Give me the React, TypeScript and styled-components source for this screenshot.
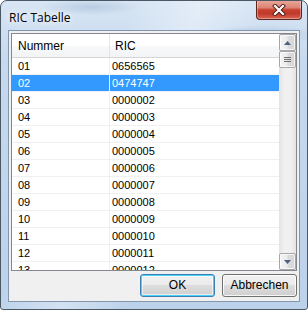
import React from "react";
import styled, { createGlobalStyle } from "styled-components";

const Global = createGlobalStyle`
  html, body { margin: 0; padding: 0; background: #ffffff; }
  body { font-family: "Liberation Sans", Arial, sans-serif; }
`;

const Window = styled.div`
  position: relative;
  width: 308px;
  height: 310px;
  box-sizing: border-box;
  border: 1px solid #4a5866;
  border-radius: 7px 7px 3px 3px;
  background:
    radial-gradient(ellipse 60px 10px at 260px 34px, rgba(120,150,185,0.35), rgba(120,150,185,0)),
    radial-gradient(ellipse 50px 8px at 90px 6px, rgba(130,160,195,0.35), rgba(130,160,195,0)),
    linear-gradient(115deg, rgba(255,255,255,0) 30%, rgba(255,255,255,0.35) 45%, rgba(255,255,255,0) 60%),
    linear-gradient(180deg, #d7e5f4 0%, #c6d9ee 20%, #bcd2ea 100%);
  display: flex;
  flex-direction: column;
  overflow: hidden;
`;

const TitleBar = styled.div`
  height: 29px;
  display: flex;
  align-items: flex-start;
  justify-content: space-between;
  padding-left: 8px;
  padding-right: 6px;
`;

const Title = styled.div`
  font-family: "Open Sans", "Noto Sans", sans-serif;
  font-size: 12px;
  color: #000;
  margin-top: 8px;
  text-shadow: 0 0 6px #ffffff, 0 0 10px #ffffff;
`;

const CloseButton = styled.div`
  width: 46px;
  height: 20px;
  margin-top: -1px;
  margin-right: -1px;
  box-sizing: border-box;
  border: 1px solid #5c2620;
  border-top: none;
  border-radius: 0 0 4px 4px;
  background: linear-gradient(180deg, #e9a99c 0%, #dc8575 40%, #c8412f 52%, #c0392b 70%, #d9634e 100%);
  box-shadow: inset 0 0 0 1px rgba(255,255,255,0.35);
  display: flex;
  align-items: center;
  justify-content: center;
`;

const Client = styled.div`
  flex: 1;
  margin: 0 7px 7px 7px;
  border: 1px solid #8396ad;
  background: #f0f0f0;
  display: flex;
  flex-direction: column;
  padding: 2px;
`;

const ListView = styled.div`
  height: 236px;
  border: 1px solid #828790;
  background: #ffffff;
  display: flex;
  overflow: hidden;
`;

const ListBody = styled.div`
  flex: 1;
  display: flex;
  flex-direction: column;
  overflow: hidden;
`;

const Header = styled.div`
  height: 23px;
  flex-shrink: 0;
  display: grid;
  grid-template-columns: 98px 1fr;
  background: linear-gradient(180deg, #ffffff 0%, #ffffff 50%, #f7f8f9 51%, #f3f4f6 100%);
  border-bottom: 1px solid #d5d5d5;
`;

const HeaderCell = styled.div<{ $last?: boolean }>`
  font-size: 12px;
  color: #000;
  display: flex;
  align-items: center;
  padding-left: ${(p) => (p.$last ? "5px" : "6px")};
  border-right: ${(p) => (p.$last ? "none" : "1px solid #e5e5e5")};
`;

const Row = styled.div<{ $selected?: boolean }>`
  height: 16px;
  flex-shrink: 0;
  display: grid;
  grid-template-columns: 98px 1fr;
  border-bottom: 1px solid #f0f0f0;
  background: ${(p) => (p.$selected ? "#3399ff" : "transparent")};
  color: ${(p) => (p.$selected ? "#ffffff" : "#000000")};
`;

const Cell = styled.div`
  font-size: 11px;
  line-height: 16px;
  padding-left: 6px;
  border-right: 1px solid #f0f0f0;
  white-space: nowrap;
`;

const Cell2 = styled(Cell)`
  padding-left: 2px;
  border-right: none;
`;

const ScrollBar = styled.div`
  width: 17px;
  flex-shrink: 0;
  display: flex;
  flex-direction: column;
  background: linear-gradient(90deg, #e3e3e3 0%, #f0f0f0 30%, #f0f0f0 70%, #e3e3e3 100%);
`;

const SBButton = styled.div`
  height: 17px;
  box-sizing: border-box;
  border: 1px solid #a7a7a7;
  border-radius: 2px;
  background: linear-gradient(90deg, #f4f4f4 0%, #ebebeb 45%, #dcdcdc 55%, #d6d6d6 100%);
  box-shadow: inset 0 0 0 1px rgba(255,255,255,0.7);
  display: flex;
  align-items: center;
  justify-content: center;
  flex-shrink: 0;
`;

const Track = styled.div`
  flex: 1;
`;

const ButtonRow = styled.div`
  flex: 1;
  display: flex;
  justify-content: flex-end;
  align-items: center;
  gap: 7px;
`;

const PushButton = styled.div<{ $default?: boolean }>`
  width: 75px;
  height: 23px;
  box-sizing: border-box;
  border: 1px solid ${(p) => (p.$default ? "#3c7fb1" : "#707070")};
  border-radius: 3px;
  background: linear-gradient(180deg, #f2f2f2 0%, #ebebeb 45%, #dddddd 50%, #cfcfcf 100%);
  box-shadow: ${(p) =>
    p.$default
      ? "inset 0 0 0 1px #48d1fd, inset 0 0 0 2px rgba(255,255,255,0.6)"
      : "inset 0 0 0 1px rgba(255,255,255,0.8)"};
  font-size: 12px;
  color: #000;
  display: flex;
  align-items: center;
  justify-content: center;
`;

const rows = [
  ["01", "0656565"],
  ["02", "0474747"],
  ["03", "0000002"],
  ["04", "0000003"],
  ["05", "0000004"],
  ["06", "0000005"],
  ["07", "0000006"],
  ["08", "0000007"],
  ["09", "0000008"],
  ["10", "0000009"],
  ["11", "0000010"],
  ["12", "0000011"],
  ["13", "0000012"],
];

const CloseX = () => (
  <svg width="14" height="12" viewBox="0 0 14 12">
    <path d="M3 2 L11 10 M11 2 L3 10" stroke="#4a1a14" strokeWidth="4" strokeLinecap="square" />
    <path d="M3 2 L11 10 M11 2 L3 10" stroke="#ffffff" strokeWidth="2.2" strokeLinecap="square" />
  </svg>
);

const UpArrow = () => (
  <svg width="7" height="4" viewBox="0 0 7 4">
    <path d="M0 4 L3.5 0 L7 4 Z" fill="#4d6185" />
  </svg>
);

const DownArrow = () => (
  <svg width="7" height="4" viewBox="0 0 7 4">
    <path d="M0 0 L3.5 4 L7 0 Z" fill="#4d6185" />
  </svg>
);

const Grip = () => (
  <svg width="7" height="7" viewBox="0 0 7 7">
    <path d="M0 1.5 H7 M0 3.5 H7 M0 5.5 H7" stroke="#6e6e6e" strokeWidth="1" />
  </svg>
);

export default function App() {
  return (
    <>
      <Global />
      <Window>
        <TitleBar>
          <Title>RIC Tabelle</Title>
          <CloseButton>
            <CloseX />
          </CloseButton>
        </TitleBar>
        <Client>
          <ListView>
            <ListBody>
              <Header>
                <HeaderCell>Nummer</HeaderCell>
                <HeaderCell $last>RIC</HeaderCell>
              </Header>
              {rows.map(([n, r], i) => (
                <Row key={n} $selected={i === 1}>
                  <Cell>{n}</Cell>
                  <Cell2>{r}</Cell2>
                </Row>
              ))}
            </ListBody>
            <ScrollBar>
              <SBButton>
                <UpArrow />
              </SBButton>
              <SBButton>
                <Grip />
              </SBButton>
              <Track />
              <SBButton>
                <DownArrow />
              </SBButton>
            </ScrollBar>
          </ListView>
          <ButtonRow>
            <PushButton $default>OK</PushButton>
            <PushButton>Abbrechen</PushButton>
          </ButtonRow>
        </Client>
      </Window>
    </>
  );
}
